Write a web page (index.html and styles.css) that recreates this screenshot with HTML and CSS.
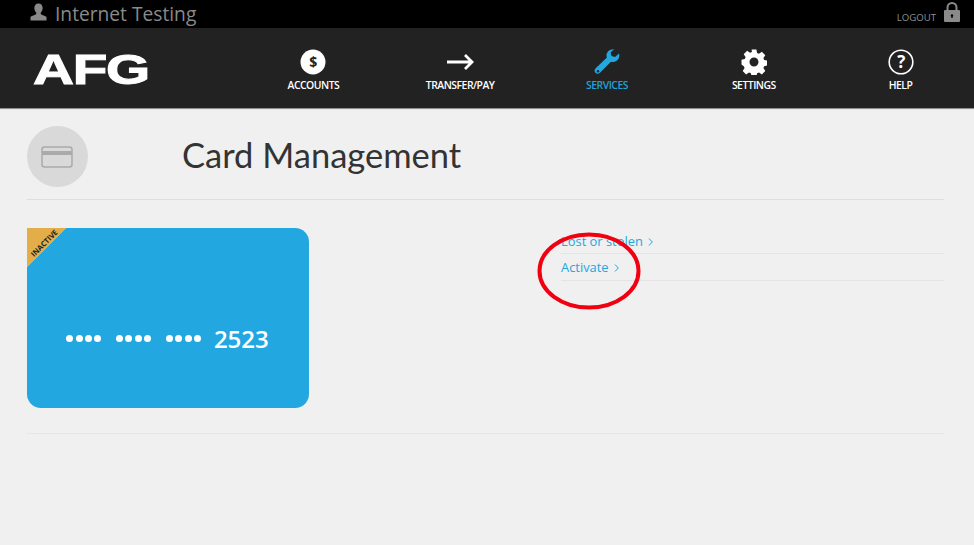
FILE: index.html
```html
<!DOCTYPE html>
<html lang="en">
<head>
<meta charset="utf-8">
<title>Card Management</title>
<link rel="stylesheet" href="styles.css">
</head>
<body>
<header class="topbar">
  <div class="user">
    <svg class="user-icon" viewBox="0 0 18 18"><path d="M9 0c2.800 0 4.400 2 4.400 4.700 0 2-.8 3.700-2 4.800v1.500c0 .8 4.600 1.600 6.100 3.400V18H.5v-3.600c1.500-1.800 6.100-2.600 6.100-3.400V9.500c-1.200-1.100-2-2.800-2-4.800C4.600 2 6.200 0 9 0z"/></svg>
    <span>Internet Testing</span>
  </div>
  <div class="logout">
    <span>LOGOUT</span>
    <svg class="lock-icon" viewBox="0 0 16 20"><path fill-rule="evenodd" d="M1 8h1.500V5.500a5.500 5.500 0 0 1 11 0V8H15a1 1 0 0 1 1 1v10a1 1 0 0 1-1 1H1a1 1 0 0 1-1-1V9a1 1 0 0 1 1-1zm3.500 0h7V5.500a3.500 3.500 0 0 0-7 0V8zM8 12.200a1.300 1.300 0 0 0-.7 2.400V16h1.400v-1.400a1.300 1.300 0 0 0-.7-2.400z"/></svg>
  </div>
</header>
<nav class="mainnav">
  <div class="logo-cell"><span class="logo">AFG</span></div>
  <ul class="navlist">
    <li class="navitem">
      <svg class="nav-icon" viewBox="0 0 26 26"><circle cx="13" cy="13" r="12.500" fill="#fff"/><text x="13" y="18" class="dollar">$</text></svg>
      <span>ACCOUNTS</span>
    </li>
    <li class="navitem">
      <svg class="nav-icon arrow" viewBox="0 0 30 26"><path d="M2 13h25M20 6l7 7-7 7" fill="none" stroke="#fff" stroke-width="2.800"/></svg>
      <span>TRANSFER/PAY</span>
    </li>
    <li class="navitem active">
      <svg class="nav-icon" viewBox="0 0 26 26"><path fill="#22a7e0" d="M19.500.5c-3.800-.6-7 2.300-7 5.900 0 .8.100 1.500.4 2.200L1.700 19.200c-1.500 1.500-1.400 3.400-.3 4.600 1.200 1.300 3.200 1.400 4.600 0L17 12.800c3.800 1.200 8-1.500 8.300-5.700.1-1 0-1.900-.3-2.700l-3.900 3.700-3.600-1-.9-3.500 3.800-3.500c-.1-.2-.3-.4-.9-.6zM4 20.900a1.300 1.300 0 1 1 0 2.600 1.300 1.300 0 0 1 0-2.600z"/></svg>
      <span>SERVICES</span>
    </li>
    <li class="navitem">
      <svg class="nav-icon" viewBox="0 0 26 26"><path fill="#fff" fill-rule="evenodd" d="M10.600.5h4.800l.7 3.400 1.900.8 2.900-1.900 3.400 3.400-1.900 2.900.8 1.900 3.300.7v4.800l-3.300.7-.8 1.900 1.900 2.900-3.400 3.400-2.900-1.900-1.900.8-.7 3.300h-4.800l-.7-3.300-1.900-.8-2.900 1.900-3.400-3.400 1.900-2.900-.8-1.900L.5 15.500v-4.800l3.300-.7.8-1.900-1.900-2.900 3.400-3.400 2.900 1.900 1.900-.8zM13 8.500a4.500 4.500 0 1 0 0 9 4.500 4.500 0 0 0 0-9z"/></svg>
      <span>SETTINGS</span>
    </li>
    <li class="navitem">
      <svg class="nav-icon" viewBox="0 0 26 26"><circle cx="13" cy="13" r="11.800" fill="none" stroke="#fff" stroke-width="1.600"/><text x="13" y="19" class="question">?</text></svg>
      <span>HELP</span>
    </li>
  </ul>
</nav>
<main class="content">
  <section class="page-head">
    <div class="head-icon">
      <svg viewBox="0 0 32 22" class="card-icon"><rect x="1" y="1" width="30" height="20" rx="2.500" fill="none" stroke="#aaa" stroke-width="1.500"/><rect x="1" y="5" width="30" height="4" fill="#aaa"/></svg>
    </div>
    <h1>Card Management</h1>
  </section>
  <section class="card-row">
    <div class="card">
      <div class="ribbon"><span>INACTIVE</span></div>
      <div class="card-number">
        <span class="dots"><i></i><i></i><i></i><i></i></span>
        <span class="dots"><i></i><i></i><i></i><i></i></span>
        <span class="dots"><i></i><i></i><i></i><i></i></span>
        <span class="last4">2523</span>
      </div>
    </div>
    <ul class="links">
      <li><a href="#">Lost or stolen<svg class="chev" viewBox="0 0 5 8"><path d="M1 .5 4.300 4 1 7.500" fill="none" stroke="#22a7e0"/></svg></a></li>
      <li><a href="#">Activate<svg class="chev" viewBox="0 0 5 8"><path d="M1 .5 4.300 4 1 7.500" fill="none" stroke="#22a7e0"/></svg></a></li>
    </ul>
  </section>
</main>
<svg class="annotation" viewBox="0 0 104 78"><ellipse cx="52" cy="39" rx="49.500" ry="36.500" fill="none" stroke="#f00010" stroke-width="4"/></svg>
</body>
</html>
```
FILE: styles.css
```css
* { box-sizing: border-box; }
html, body { margin: 0; padding: 0; }
body {
  width: 974px;
  height: 545px;
  overflow: hidden;
  background: #f0f0f0;
  font-family: "Open Sans", "Liberation Sans", sans-serif;
  position: relative;
}
.topbar {
  height: 28px;
  background: #000;
  display: flex;
  justify-content: space-between;
  align-items: center;
  padding: 0 14px 0 30px;
  color: #8a8a8a;
}
.user { display: flex; align-items: center; gap: 8px; font-size: 19.200px; line-height: 28px; }
.user-icon { width: 17px; height: 18px; fill: #8a8a8a; margin-top: -5px; }
.logout { display: flex; align-items: center; gap: 8px; font-size: 9.600px; color: #8f8f8f; }
.logout span { margin-top: 6px; }
.lock-icon { width: 16px; height: 20px; fill: #8a8a8a; margin-top: -4px; }
.mainnav {
  height: 81px;
  background: #222;
  border-bottom: 1px solid #8f8f8f;
  display: flex;
}
.logo-cell { width: 240px; padding: 22px 0 0 33px; }
.logo {
  display: block;
  width: 115px;
  font-family: "Liberation Sans", sans-serif;
  font-weight: 700;
  font-size: 43px;
  line-height: 38px;
  color: #fff;
  letter-spacing: -1px;
  -webkit-text-stroke: 1px #fff;
  transform: scaleX(1.32);
  transform-origin: left center;
}
.navlist {
  list-style: none;
  margin: 0;
  padding: 0;
  flex: 1;
  display: grid;
  grid-template-columns: repeat(5, 1fr);
}
.navitem {
  display: flex;
  flex-direction: column;
  align-items: center;
  padding-top: 21px;
  color: #fff;
  font-size: 10.400px;
  letter-spacing: -0.500px;
  font-weight: 600;
  line-height: 14px;
}
.nav-icon { width: 26px; height: 26px; margin-bottom: 3px; display: block; }
.navitem.active { color: #22a0d8; }
.nav-icon.arrow { width: 30px; }
.dollar, .question {
  font-family: "Open Sans", sans-serif;
  font-weight: 700;
  text-anchor: middle;
}
.dollar { font-size: 14px; fill: #222; }
.question { font-size: 17px; fill: #fff; }
.content { padding: 0 30px 0 27px; border-top: 1px solid #e6e6e6; }
.page-head {
  height: 90px;
  padding-top: 16px;
  border-bottom: 1px solid #dedede;
  display: flex;
  align-items: flex-start;
}
.head-icon {
  width: 61px;
  height: 61px;
  border-radius: 50%;
  background: #d9d9d9;
  display: flex;
  align-items: center;
  justify-content: center;
  padding-right: 2px;
}
.card-icon { width: 32px; height: 22px; }
h1 {
  margin: 6px 0 0 94px;
  font-family: "Lato", sans-serif;
  font-size: 34.500px;
  line-height: 46px;
  font-weight: 400;
  color: #333;
}
.card-row {
  height: 234px;
  padding-top: 28px;
  border-bottom: 1px solid #e6e6e6;
  display: flex;
  align-items: flex-start;
}
.card {
  width: 282px;
  height: 180px;
  background: #22a7e0;
  border-radius: 0 14px 14px 14px;
  position: relative;
  overflow: hidden;
  display: flex;
  align-items: center;
  justify-content: center;
}
.ribbon {
  position: absolute;
  left: 0;
  top: 0;
  width: 40px;
  height: 40px;
  background: linear-gradient(135deg, #e3ae4a 50%, transparent 50%);
}
.ribbon span {
  position: absolute;
  left: -3px;
  top: 11px;
  width: 40px;
  text-align: center;
  font-size: 7.500px;
  line-height: 8px;
  font-weight: 700;
  color: #222;
  transform: rotate(-45deg);
}
.card-number { display: flex; align-items: center; color: #fff; margin-top: 41px; margin-left: -1px; }
.dots { display: flex; gap: 2.300px; margin-right: 15px; }
.dots i { width: 7px; height: 7px; border-radius: 50%; background: #fff; display: block; }
.last4 { font-size: 24px; font-weight: 600; line-height: 30px; margin-left: -2px; }
.links { list-style: none; margin: 0 0 0 252px; padding: 0; flex: 1; }
.links li { height: 26.400px; border-bottom: 1px solid #e4e4e4; font-size: 12.900px; line-height: 27px; }
.links a { color: #22a7e0; text-decoration: none; }
.chev { width: 5px; height: 8px; margin-left: 5px; }
.annotation { position: absolute; left: 537px; top: 232px; width: 104px; height: 78px; }
```
